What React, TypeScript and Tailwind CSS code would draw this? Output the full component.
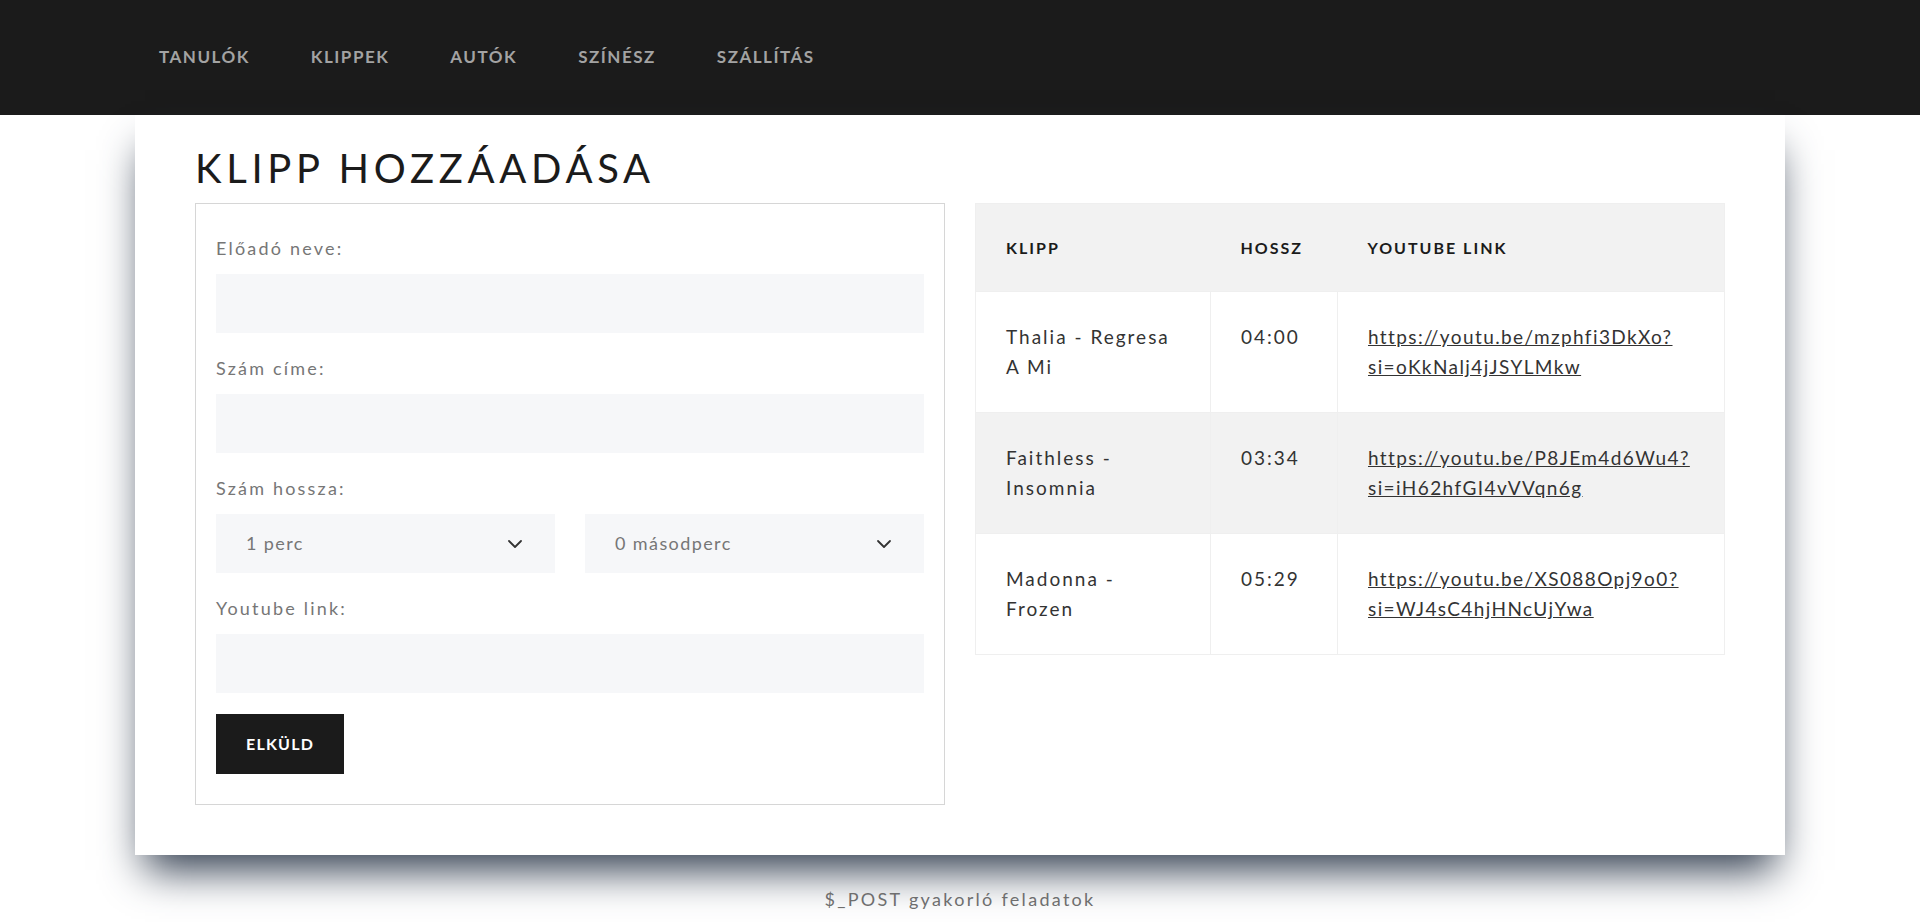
import React from 'react';
import { ChevronDown } from 'lucide-react';

const navItems = ['Tanulók', 'Klippek', 'Autók', 'Színész', 'Szállítás'];

const clips = [
  { title: ['Thalia - Regresa', 'A Mi'], length: '04:00', link: ['https://youtu.be/mzphfi3DkXo?', 'si=oKkNalj4jJSYLMkw'] },
  { title: ['Faithless -', 'Insomnia'], length: '03:34', link: ['https://youtu.be/P8JEm4d6Wu4?', 'si=iH62hfGI4vVVqn6g'] },
  { title: ['Madonna -', 'Frozen'], length: '05:29', link: ['https://youtu.be/XS088Opj9o0?', 'si=WJ4sC4hjHNcUjYwa'] },
];

const labelClass = 'block mb-3 text-[18px] leading-[27px] font-normal tracking-[2.2px] text-[#767676]';

const Field: React.FC<{ label: string }> = ({ label }) => (
  <>
    <label className={labelClass}>{label}</label>
    <input type="text" className="block w-full h-[59px] mb-[22px] bg-[#f6f7f9] outline-none px-[30px]" />
  </>
);

const Select: React.FC<{ value: string }> = ({ value }) => (
  <div className="relative flex-1">
    <select className="w-full h-[59px] appearance-none bg-[#f6f7f9] pl-[30px] text-[18px] font-normal tracking-[1.4px] text-[#767676] outline-none">
      <option>{value}</option>
    </select>
    <ChevronDown size={24} strokeWidth={1.8} className="absolute right-[28px] top-1/2 -translate-y-1/2 text-[#333] pointer-events-none" />
  </div>
);

const App: React.FC = () => {
  return (
    <div className="min-h-screen bg-white font-['Lato','Noto_Sans',sans-serif] text-[#1b1b1b]">
      <nav className="h-[115px] bg-[#1b1b1b] flex items-center">
        <ul className="flex gap-[61px] pl-[159px] -mt-[2px]">
          {navItems.map(item => (
            <li key={item} className="text-[17px] font-bold uppercase tracking-[1.5px] text-[#a3a3a3]">
              {item}
            </li>
          ))}
        </ul>
      </nav>

      <main className="w-[1650px] mx-auto bg-white px-[60px] pt-[29px] pb-[50px] shadow-[0_25px_40px_-10px_rgba(48,60,78,1)]">
        <h1 className="text-[40px] leading-[48px] font-normal tracking-[4.7px] uppercase mb-[11px]">Klipp hozzáadása</h1>

        <div className="grid grid-cols-2 gap-[30px] items-start">
          <form className="border border-[#d6d6d6] px-5 pt-[31px] pb-[30px]" onSubmit={e => e.preventDefault()}>
            <Field label="Előadó neve:" />
            <Field label="Szám címe:" />
            <label className={labelClass}>Szám hossza:</label>
            <div className="flex gap-[30px] mb-[22px]">
              <Select value="1 perc" />
              <Select value="0 másodperc" />
            </div>
            <Field label="Youtube link:" />
            <button type="submit" className="block h-[60px] px-[30px] -mt-px bg-[#1b1b1b] text-white text-[16px] font-bold tracking-[1.2px]">
              ELKÜLD
            </button>
          </form>

          <table className="w-full table-fixed border-collapse border border-[#efefef] text-left">
            <thead>
              <tr className="bg-[#f2f2f2]">
                <th className="w-[235px] px-[30px] py-[30px] leading-[27px] text-[16px] font-bold uppercase tracking-[2px]">Klipp</th>
                <th className="w-[127px] px-[30px] py-[30px] leading-[27px] text-[16px] font-bold uppercase tracking-[2px]">Hossz</th>
                <th className="px-[30px] py-[30px] leading-[27px] text-[16px] font-bold uppercase tracking-[2px]">Youtube link</th>
              </tr>
            </thead>
            <tbody>
              {clips.map((clip, i) => (
                <tr key={clip.length} className={i % 2 === 1 ? 'bg-[#f2f2f2]' : 'bg-white'}>
                  <td className="align-top border border-[#efefef] p-[30px] leading-[30px] text-[19px] tracking-[2px] text-[#333]">
                    {clip.title[0]}<br />{clip.title[1]}
                  </td>
                  <td className="align-top border border-[#efefef] p-[30px] leading-[30px] text-[19px] tracking-[2px] text-[#333]">
                    {clip.length}
                  </td>
                  <td className="align-top border border-[#efefef] p-[30px] leading-[30px] text-[19px] tracking-[1.4px] text-[#333] whitespace-nowrap">
                    <a href="#" className="underline">{clip.link[0]}<br />{clip.link[1]}</a>
                  </td>
                </tr>
              ))}
            </tbody>
          </table>
        </div>
      </main>

      <footer className="mt-[31px] text-center text-[18px] leading-[27px] tracking-[2.3px] text-[#6e6e6e]">
        $_POST gyakorló feladatok
      </footer>
    </div>
  );
};

export default App;
